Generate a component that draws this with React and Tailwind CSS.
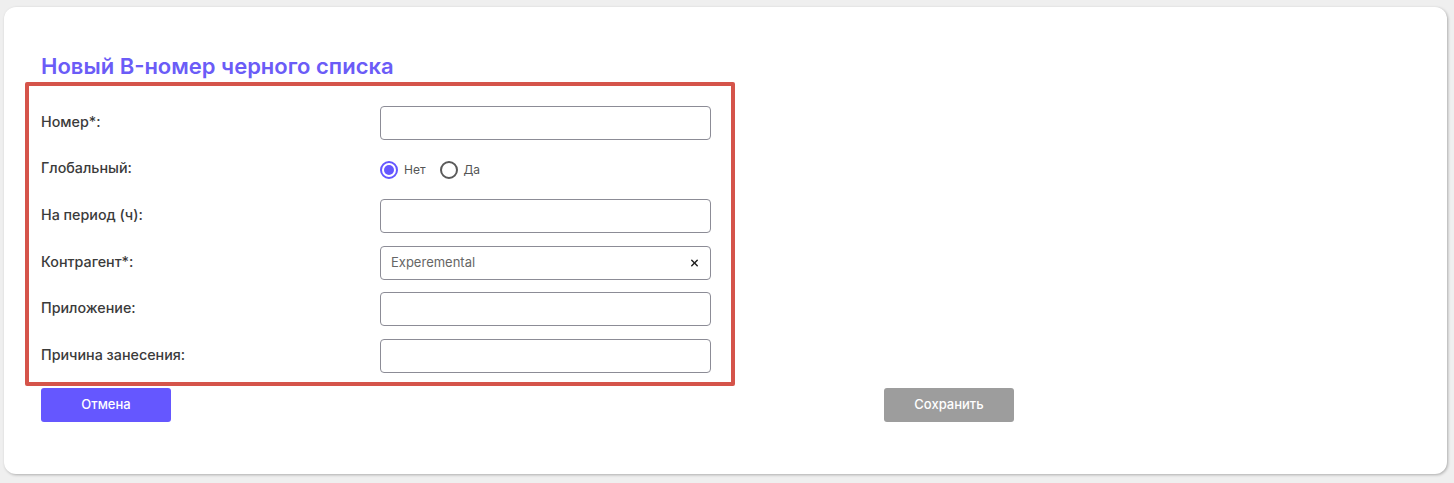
import { X } from "lucide-react";

const font = { fontFamily: "Inter, 'Noto Sans', sans-serif" };

function TextField({ value, clearable }) {
    return (
        <div className="relative w-[331px] h-[34px] rounded-[4px] border border-[#8c8c96] bg-white flex items-center px-[10px]">
            {value && (
                <span className="text-[13px] text-[#666]">{value}</span>
            )}
            {clearable && (
                <X
                    size={11}
                    strokeWidth={3.2}
                    className="absolute right-[10px] top-1/2 -translate-y-1/2 text-[#222]"
                />
            )}
        </div>
    );
}

function Radio({ checked, label }) {
    return (
        <label className="flex items-center gap-[6px]">
            <span
                className={
                    checked
                        ? "w-[18px] h-[18px] rounded-full border-2 border-[#6557ff] flex items-center justify-center"
                        : "w-[18px] h-[18px] rounded-full border-2 border-[#5a5a5a]"
                }
            >
                {checked && (
                    <span className="w-[10px] h-[10px] rounded-full bg-[#6557ff]" />
                )}
            </span>
            <span className="text-[12px] text-[#555]">{label}</span>
        </label>
    );
}

const rows = [
    { label: "Номер*:", field: <TextField /> },
    {
        label: "Глобальный:",
        field: (
            <div className="flex items-center gap-[14px]">
                <Radio checked label="Нет" />
                <Radio label="Да" />
            </div>
        ),
    },
    { label: "На период (ч):", field: <TextField /> },
    {
        label: "Контрагент*:",
        field: <TextField value="Experemental" clearable />,
    },
    { label: "Приложение:", field: <TextField /> },
    { label: "Причина занесения:", field: <TextField /> },
];

export default function App() {
    return (
        <div
            className="w-[1454px] h-[483px] bg-[#efefef] pt-[7px] pl-[4px] pr-[7px]"
            style={font}
        >
            <div className="h-[467px] bg-white rounded-[12px] shadow-[1px_1px_3px_rgba(0,0,0,0.28)] pt-[45px]">
                <h1 className="pl-[37px] text-[22px] leading-[28px] font-semibold text-[#6b5cf7]">
                    Новый B-номер черного списка
                </h1>
                <div className="ml-[21px] mt-[2px] w-[710px] border-4 border-[#d5544a] rounded-[2px] pt-[20px] pb-[9px] pl-[12px] pr-[20px] flex flex-col gap-[12.6px]">
                    {rows.map((row) => (
                        <div
                            key={row.label}
                            className="h-[34px] flex items-center"
                        >
                            <div className="w-[339px] pb-[3px] text-[14.3px] font-medium text-[#3b3b3b]">
                                {row.label}
                            </div>
                            {row.field}
                        </div>
                    ))}
                </div>
                <div className="mt-[2px] pl-[37px] flex">
                    <button className="w-[130px] h-[34px] rounded-[3px] bg-[#6557ff] text-white text-[13px] font-medium">
                        Отмена
                    </button>
                    <button className="ml-[713px] w-[130px] h-[34px] rounded-[3px] bg-[#9d9d9d] text-white text-[13px] font-medium">
                        Сохранить
                    </button>
                </div>
            </div>
        </div>
    );
}
